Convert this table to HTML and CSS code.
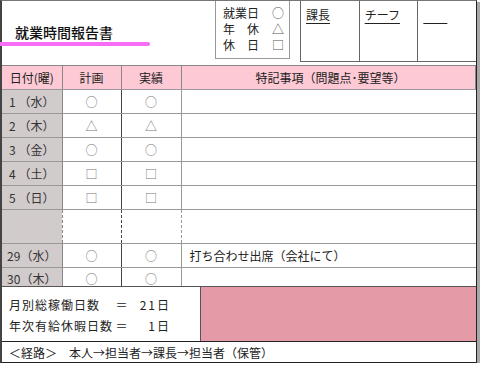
FILE: index.html
```html
<!DOCTYPE html>
<html lang="ja">
<head>
    <meta charset="UTF-8">
    <meta name="viewport" content="width=device-width, initial-scale=1.0">
    <title>就業時間報告書</title>
    <link rel="stylesheet" href="styles.css">
</head>
<body>
    <div class="sheet">
        <!-- 上段：タイトル・凡例・押印欄 -->
        <div class="head">
            <div class="title-area">
                <h1 class="title">就業時間報告書</h1>
                <div class="title-line"></div>
            </div>
            <div class="legend">
                <div class="legend-row"><span class="legend-name">就業日</span><span>○</span></div>
                <div class="legend-row"><span class="legend-name spread">年休</span><span>△</span></div>
                <div class="legend-row"><span class="legend-name spread">休日</span><span>□</span></div>
            </div>
            <div class="stamps">
                <div class="stamp"><span class="stamp-name">課長</span></div>
                <div class="stamp"><span class="stamp-name">チーフ</span></div>
                <div class="stamp"><span class="stamp-name">&emsp;&emsp;</span></div>
            </div>
        </div>

        <table class="report">
            <thead>
                <tr>
                    <th class="col-date">日付(曜)</th>
                    <th class="col-plan">計画</th>
                    <th class="col-result">実績</th>
                    <th class="col-note">特記事項（問題点･要望等）</th>
                </tr>
            </thead>
            <tbody>
                <tr><td class="day">1 （水）</td><td>○</td><td>○</td><td class="note"></td></tr>
                <tr><td class="day">2 （木）</td><td>△</td><td>△</td><td class="note"></td></tr>
                <tr><td class="day">3 （金）</td><td>○</td><td>○</td><td class="note"></td></tr>
                <tr><td class="day">4 （土）</td><td>□</td><td>□</td><td class="note"></td></tr>
                <tr><td class="day">5 （日）</td><td>□</td><td>□</td><td class="note"></td></tr>
                <tr class="gap"><td class="day"></td><td></td><td></td><td class="note"></td></tr>
                <tr><td class="day">29（水）</td><td>○</td><td>○</td><td class="note">打ち合わせ出席（会社にて）</td></tr>
                <tr class="last"><td class="day">30（木）</td><td>○</td><td>○</td><td class="note"></td></tr>
            </tbody>
        </table>

        <div class="summary">
            <div class="totals">
                <div class="total-row"><span class="total-name">月別総稼働日数</span><span class="eq">＝</span><span class="num">21日</span></div>
                <div class="total-row"><span class="total-name">年次有給休暇日数</span><span class="eq">＝</span><span class="num">1日</span></div>
            </div>
            <div class="summary-fill"></div>
        </div>

        <div class="route">＜経路＞　本人→担当者→課長→担当者（保管）</div>
    </div>
</body>
</html>
```

FILE: styles.css
```css
* {
    box-sizing: border-box;
}

body {
    margin: 0;
    background-color: #fff;
    font-family: "Noto Sans CJK JP", "Liberation Sans", sans-serif;
    font-size: 12px;
    color: #222;
}

.sheet {
    width: 477px;
    height: 363px;
    border-top: 1px solid #777;
    border-left: 2px solid #444;
    border-right: 1px solid #222;
    border-bottom: 1px solid #222;
    box-shadow: 3px 2px 0 #a8a8a8;
    display: flex;
    flex-direction: column;
}

/* 上段 */

.head {
    height: 65px;
    flex-shrink: 0;
    display: flex;
    border-bottom: 1px solid #888;
}

.title-area {
    width: 213px;
    padding-top: 22px;
}

.title {
    margin: 0 0 0 13px;
    font-size: 14px;
    font-weight: 500;
    line-height: 18px;
    color: #111;
}

.title-line {
    width: 150px;
    height: 4px;
    margin-top: 1px;
    margin-left: -2px;
    background-color: #f56ef5;
    border-radius: 0 2px 2px 0;
}

.legend {
    width: 75px;
    height: 58px;
    border: 1px solid #999;
    border-top: none;
    padding: 4px 0 0 7px;
}

.legend-row {
    display: flex;
    height: 16px;
    line-height: 16px;
}

.legend-name {
    width: 49px;
}

.legend-name.spread {
    letter-spacing: 12px;
}

.legend-row span:last-child {
    color: #555;
}

.stamps {
    flex: 1;
    display: flex;
    margin-left: 10px;
    height: 61px;
    border-left: 1px solid #666;
    border-bottom: 1px solid #666;
}

.stamp {
    flex: 1;
    padding: 5px 0 0 5px;
    border-right: 1px solid #666;
}

.stamp:last-child {
    border-right: none;
}

.stamp-name {
    text-decoration: underline;
    text-underline-offset: 3px;
}

/* 日別の表 */

.report {
    width: 100%;
    border-collapse: collapse;
    table-layout: fixed;
    flex-shrink: 0;
}

.report th,
.report td {
    height: 24px;
    padding: 0;
    font-weight: normal;
    text-align: center;
    white-space: nowrap;
    border-bottom: 1px solid #999;
    border-right: 1px solid #999;
}

.report th {
    height: 23px;
    background-color: #fdc9d5;
    border-right-color: #888;
}

.col-date {
    width: 60px;
}

.col-plan {
    width: 59px;
}

.col-result {
    width: 60px;
}

.report th.col-note {
    text-align: left;
    padding-left: 74px;
}

.report td:nth-child(2) {
    border-right: 1px solid #444;
    color: #777;
}

.report td:nth-child(3) {
    color: #777;
}

.report td.day {
    background-color: #d1cbcb;
    border-right: 1px solid #888;
    color: #333;
}

.report td.note {
    text-align: left;
    padding-left: 8px;
    border-right: none;
    color: #222;
}

.report .gap td {
    height: 34px;
    border-right-style: dashed;
}

.report .gap td.note {
    border-right: none;
}

.report .last td {
    height: 18px;
    padding-top: 4px;
    border-bottom: none;
    line-height: 14px;
}

/* 集計 */

.summary {
    height: 56px;
    flex-shrink: 0;
    display: flex;
    border-top: 1px solid #555;
    border-bottom: 1px solid #222;
}

.totals {
    width: 199px;
    padding: 7px 0 0 7px;
    border-right: 1px solid #555;
}

.total-row {
    display: flex;
    height: 21px;
    line-height: 21px;
    letter-spacing: 1px;
    white-space: nowrap;
}

.total-name {
    width: 106px;
}

.eq {
    width: 14px;
    text-align: center;
}

.num {
    width: 42px;
    text-align: right;
    letter-spacing: 2px;
}

.summary-fill {
    flex: 1;
    background-color: #e59ba7;
}

.route {
    flex: 1;
    padding: 2px 0 0 7px;
    font-size: 12px;
    white-space: nowrap;
}
```
